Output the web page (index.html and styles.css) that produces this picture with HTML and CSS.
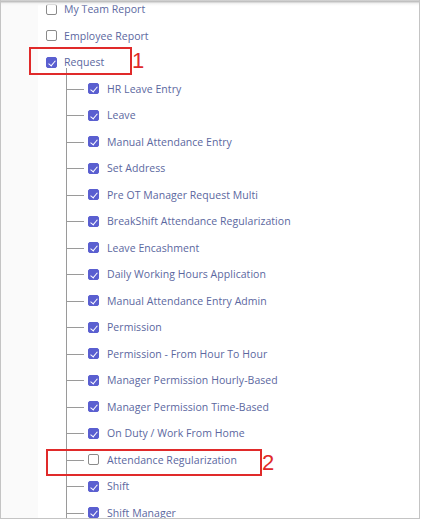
FILE: index.html
```html
<!DOCTYPE html>
<html>
<head>
<meta charset="utf-8">
<link rel="stylesheet" href="styles.css">
</head>
<body>
<div class="frame">
  <div class="topshadow"></div>
  <div class="panel">
    <aside class="side"></aside>
    <main class="content">
      <ul class="tree">
        <li class="node"><span class="cb"></span><span class="label">My Team Report</span></li>
        <li class="node"><span class="cb"></span><span class="label">Employee Report</span></li>
        <li class="node node-req"><span class="cb on"></span><span class="label">Request</span></li>
      </ul>
      <ul class="children">
        <li class="leaf"><span class="cb on"></span><span class="label">HR Leave Entry</span></li>
        <li class="leaf"><span class="cb on"></span><span class="label">Leave</span></li>
        <li class="leaf"><span class="cb on"></span><span class="label">Manual Attendance Entry</span></li>
        <li class="leaf"><span class="cb on"></span><span class="label">Set Address</span></li>
        <li class="leaf"><span class="cb on"></span><span class="label">Pre OT Manager Request Multi</span></li>
        <li class="leaf"><span class="cb on"></span><span class="label">BreakShift Attendance Regularization</span></li>
        <li class="leaf"><span class="cb on"></span><span class="label">Leave Encashment</span></li>
        <li class="leaf"><span class="cb on"></span><span class="label">Daily Working Hours Application</span></li>
        <li class="leaf"><span class="cb on"></span><span class="label">Manual Attendance Entry Admin</span></li>
        <li class="leaf"><span class="cb on"></span><span class="label">Permission</span></li>
        <li class="leaf"><span class="cb on"></span><span class="label">Permission - From Hour To Hour</span></li>
        <li class="leaf"><span class="cb on"></span><span class="label">Manager Permission Hourly-Based</span></li>
        <li class="leaf"><span class="cb on"></span><span class="label">Manager Permission Time-Based</span></li>
        <li class="leaf"><span class="cb on"></span><span class="label">On Duty / Work From Home</span></li>
        <li class="leaf"><span class="cb"></span><span class="label">Attendance Regularization</span></li>
        <li class="leaf"><span class="cb on"></span><span class="label">Shift</span></li>
        <li class="leaf"><span class="cb on"></span><span class="label">Shift Manager</span></li>
      </ul>
    </main>
  </div>
  <div class="mark mark-1"><span class="num">1</span></div>
  <div class="mark mark-2"><span class="num">2</span></div>
</div>
</body>
</html>
```

FILE: styles.css
```css
* { box-sizing: border-box; }
html, body {
  margin: 0;
  padding: 0;
  background: #fff;
  width: 421px;
  height: 520px;
  overflow: hidden;
}
.frame {
  position: relative;
  width: 420px;
  height: 519px;
  border-left: 1px solid #c4c4c4;
  border-right: 1px solid #c4c4c4;
  border-bottom: 1px solid #c4c4c4;
  overflow: hidden;
  font-family: "Open Sans", "Liberation Sans", sans-serif;
}
.topshadow {
  position: absolute;
  left: 0; right: 0; top: 0;
  height: 6px;
  background: linear-gradient(#e6e6e6 0, #b9b9b9 1px, #c8c8c8 2px, #ececec 3px, #f6f6f6 4px, rgba(255,255,255,0) 6px);
  z-index: 2;
}
.panel {
  display: flex;
  height: 100%;
}
.side {
  width: 37px;
  flex: none;
  background: #fafafa;
}
.content {
  flex: 1;
  margin-top: -4px;
}
ul { list-style: none; margin: 0; padding: 0; }
.tree { padding-left: 8px; }
.node {
  height: 26.5px;
  display: flex;
  align-items: center;
  gap: 7px;
}
.children {
  margin-left: 28px;
  border-left: 1px solid #9a9a9a;
  margin-top: -8px;
  padding-top: 8px;
}
.leaf {
  position: relative;
  height: 26.5px;
  display: flex;
  align-items: center;
  padding-left: 21px;
  gap: 8px;
}
.leaf::before {
  content: "";
  position: absolute;
  left: 0;
  top: 50%;
  width: 17px;
  border-top: 1px solid #9a9a9a;
}
.label {
  font-size: 10.5px;
  color: #5b67a0;
  letter-spacing: 0.05px;
  white-space: nowrap;
}
.cb {
  width: 11px;
  height: 11px;
  flex: none;
  border: 1px solid #8a8a8a;
  border-radius: 2px;
  background: #fff;
  position: relative;
}
.cb.on {
  background: #5a5fd0;
  border-color: #5a5fd0;
}
.cb.on::after {
  content: "";
  position: absolute;
  left: 3px;
  top: 1px;
  width: 3px;
  height: 6px;
  border-right: 1.6px solid #fff;
  border-bottom: 1.6px solid #fff;
  transform: rotate(40deg);
}
.mark {
  position: absolute;
  border: 2px solid #e02a2a;
  z-index: 3;
}
.mark-1 { left: 28px; top: 47px; width: 103px; height: 28px; }
.mark-2 { left: 45px; top: 449px; width: 216px; height: 27px; }
.num {
  position: absolute;
  left: 100%;
  top: 50%;
  transform: translateY(-50%);
  margin-left: 2px;
  font-family: "Liberation Sans", Arial, sans-serif;
  font-size: 22px;
  line-height: 1;
  color: #e02a2a;
}
```
